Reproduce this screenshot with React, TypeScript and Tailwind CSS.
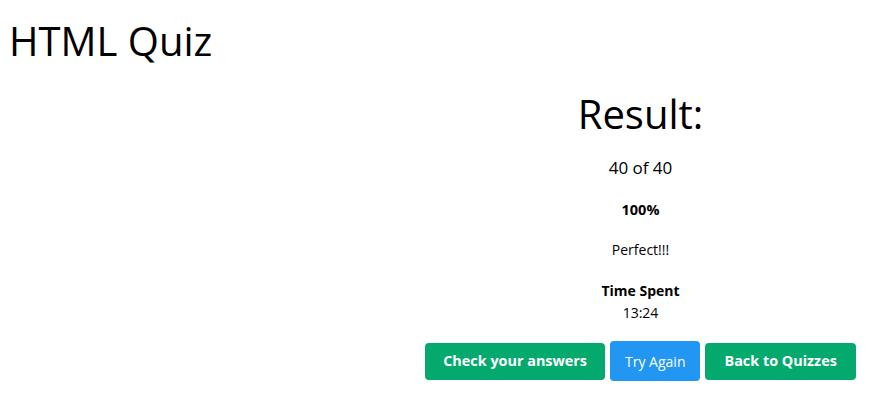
export default function App() {
  return (
    <div className="min-h-[409px] bg-white text-black font-['Open_Sans',sans-serif]">
      <h1 className="pl-[9px] pt-[13px] text-[40px] leading-[56px]">HTML Quiz</h1>

      <div className="grid grid-cols-[398px_1fr]">
        <div />
        <div className="flex flex-col items-center text-center">
          <h2 className="mt-[17px] text-[40px] leading-[56px]">Result:</h2>
          <p className="mt-[14px] text-[17px] leading-[24px]">40 of 40</p>
          <p className="mt-[19px] text-[14.5px] font-bold leading-[22px]">100%</p>
          <p className="mt-[18px] text-[14px] leading-[22px]">Perfect!!!</p>
          <p className="mt-[19px] text-[14px] font-bold leading-[22px]">Time Spent</p>
          <p className="text-[14px] leading-[22px]">13:24</p>
          <div className="mt-[17px] flex items-center gap-[5px]">
            <button className="h-[37px] rounded-[4px] bg-[#04aa6d] px-[18px] text-[14.4px] font-bold text-white">
              Check your answers
            </button>
            <button className="h-[40px] rounded-[4px] bg-[#2196f3] px-[15px] text-[14px] text-white">
              Try Again
            </button>
            <button className="h-[37px] rounded-[4px] bg-[#04aa6d] px-[19px] text-[14.4px] font-bold text-white">
              Back to Quizzes
            </button>
          </div>
        </div>
      </div>
    </div>
  );
}
